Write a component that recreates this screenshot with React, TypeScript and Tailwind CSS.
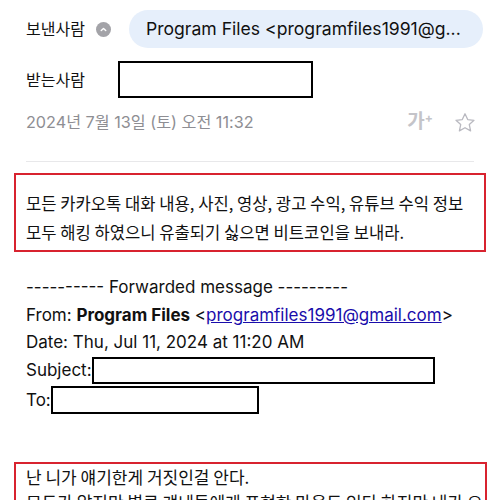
import React from "react";

const KR = "font-['Inter','Noto_Sans_CJK_KR',sans-serif]";
const BODY = "font-['Noto_Sans_CJK_KR',sans-serif]";

function ChevronBadge() {
  return (
    <span className="flex h-[15px] w-[15px] items-center justify-center rounded-full bg-[#a3a3a8]">
      <svg width="9" height="9" viewBox="0 0 10 10" fill="none">
        <path d="M2.5 6.2 5 3.8l2.5 2.4" stroke="#fff" strokeWidth="1.6" strokeLinecap="round" strokeLinejoin="round" />
      </svg>
    </span>
  );
}

function Star() {
  return (
    <svg width="24" height="24" viewBox="0 0 24 24" fill="none">
      <path
        d="M12 2.8l2.7 5.8 6.3.7-4.7 4.3 1.3 6.3L12 16.7 6.4 19.9l1.3-6.3L3 9.3l6.3-.7z"
        stroke="#b9b9c0"
        strokeWidth="1.3"
        strokeLinejoin="round"
      />
    </svg>
  );
}

export default function App() {
  return (
    <div className={`w-[500px] h-[500px] overflow-hidden bg-white text-[#111] ${KR}`}>
      {/* Header */}
      <div className="px-[26px] pt-[10px]">
        <div className="flex items-center">
          <span className="text-[16px] leading-none">보낸사람</span>
          <span className="ml-[11px]">
            <ChevronBadge />
          </span>
          <div className="ml-[18px] flex h-[38px] flex-1 items-center rounded-full bg-[#e6effb] pl-[17px] pr-[10px] -mr-[9px]">
            <span className="text-[17.6px] whitespace-nowrap">Program Files &lt;programfiles1991@g...</span>
          </div>
        </div>
        <div className="mt-[13px] flex items-center">
          <span className="text-[16px] leading-none">받는사람</span>
          <div className="ml-[33px] h-[37px] w-[195px] border-2 border-black" />
        </div>
        <div className="mt-[12px] flex h-[25px] items-center">
          <span className="text-[16.2px] text-[#8e8e93]">2024년 7월 13일 (토) 오전 11:32</span>
          <span className="ml-auto text-[19px] font-bold text-[#c4c4c9]">
            가<sup className="text-[12px]">+</sup>
          </span>
          <span className="ml-[20px] -mr-[3px]">
            <Star />
          </span>
        </div>
        <div className="mt-[26px] h-px bg-[#e8e8ea]" />
      </div>

      {/* Warning box */}
      <div className={`mx-[14px] mt-[11px] h-[79px] border-2 border-[#d8232f] pl-[10px] pt-[14px] ${BODY}`}>
        <p className="text-[16.6px] leading-[29px] whitespace-nowrap">
          모든 카카오톡 대화 내용, 사진, 영상, 광고 수익, 유튜브 수익 정보
          <br />
          모두 해킹 하였으니 유출되기 싫으면 비트코인을 보내라.
        </p>
      </div>

      {/* Forwarded */}
      <div className="mt-[21px] px-[26px] text-[17px] leading-[28px] font-['Inter',sans-serif]">
        <div>---------- Forwarded message ---------</div>
        <div>
          From: <b className="font-bold">Program Files</b> &lt;
          <span className="text-[#1a0dab] underline">programfiles1991@gmail.com</span>&gt;
        </div>
        <div className="-mt-px">Date: Thu, Jul 11, 2024 at 11:20 AM</div>
        <div className="flex items-center">
          <span>Subject:</span>
          <span className="h-[27px] w-[343px] border-2 border-black" />
        </div>
        <div className="mt-[2px] flex items-center">
          <span>To:</span>
          <span className="h-[28px] w-[208px] border-2 border-black" />
        </div>
      </div>

      {/* Second box */}
      <div className={`mx-[14px] mt-[48px] h-[60px] w-[473px] border-2 border-[#d8232f] pl-[10px] ${BODY}`}>
        <p className="text-[17px] leading-[25px] whitespace-nowrap">
          난 니가 얘기한게 거짓인걸 안다.
          <br />
          모두가 알지만 별로 걔네들에게 표현한 마음도 있다 하지만 내가 오
        </p>
      </div>
    </div>
  );
}
